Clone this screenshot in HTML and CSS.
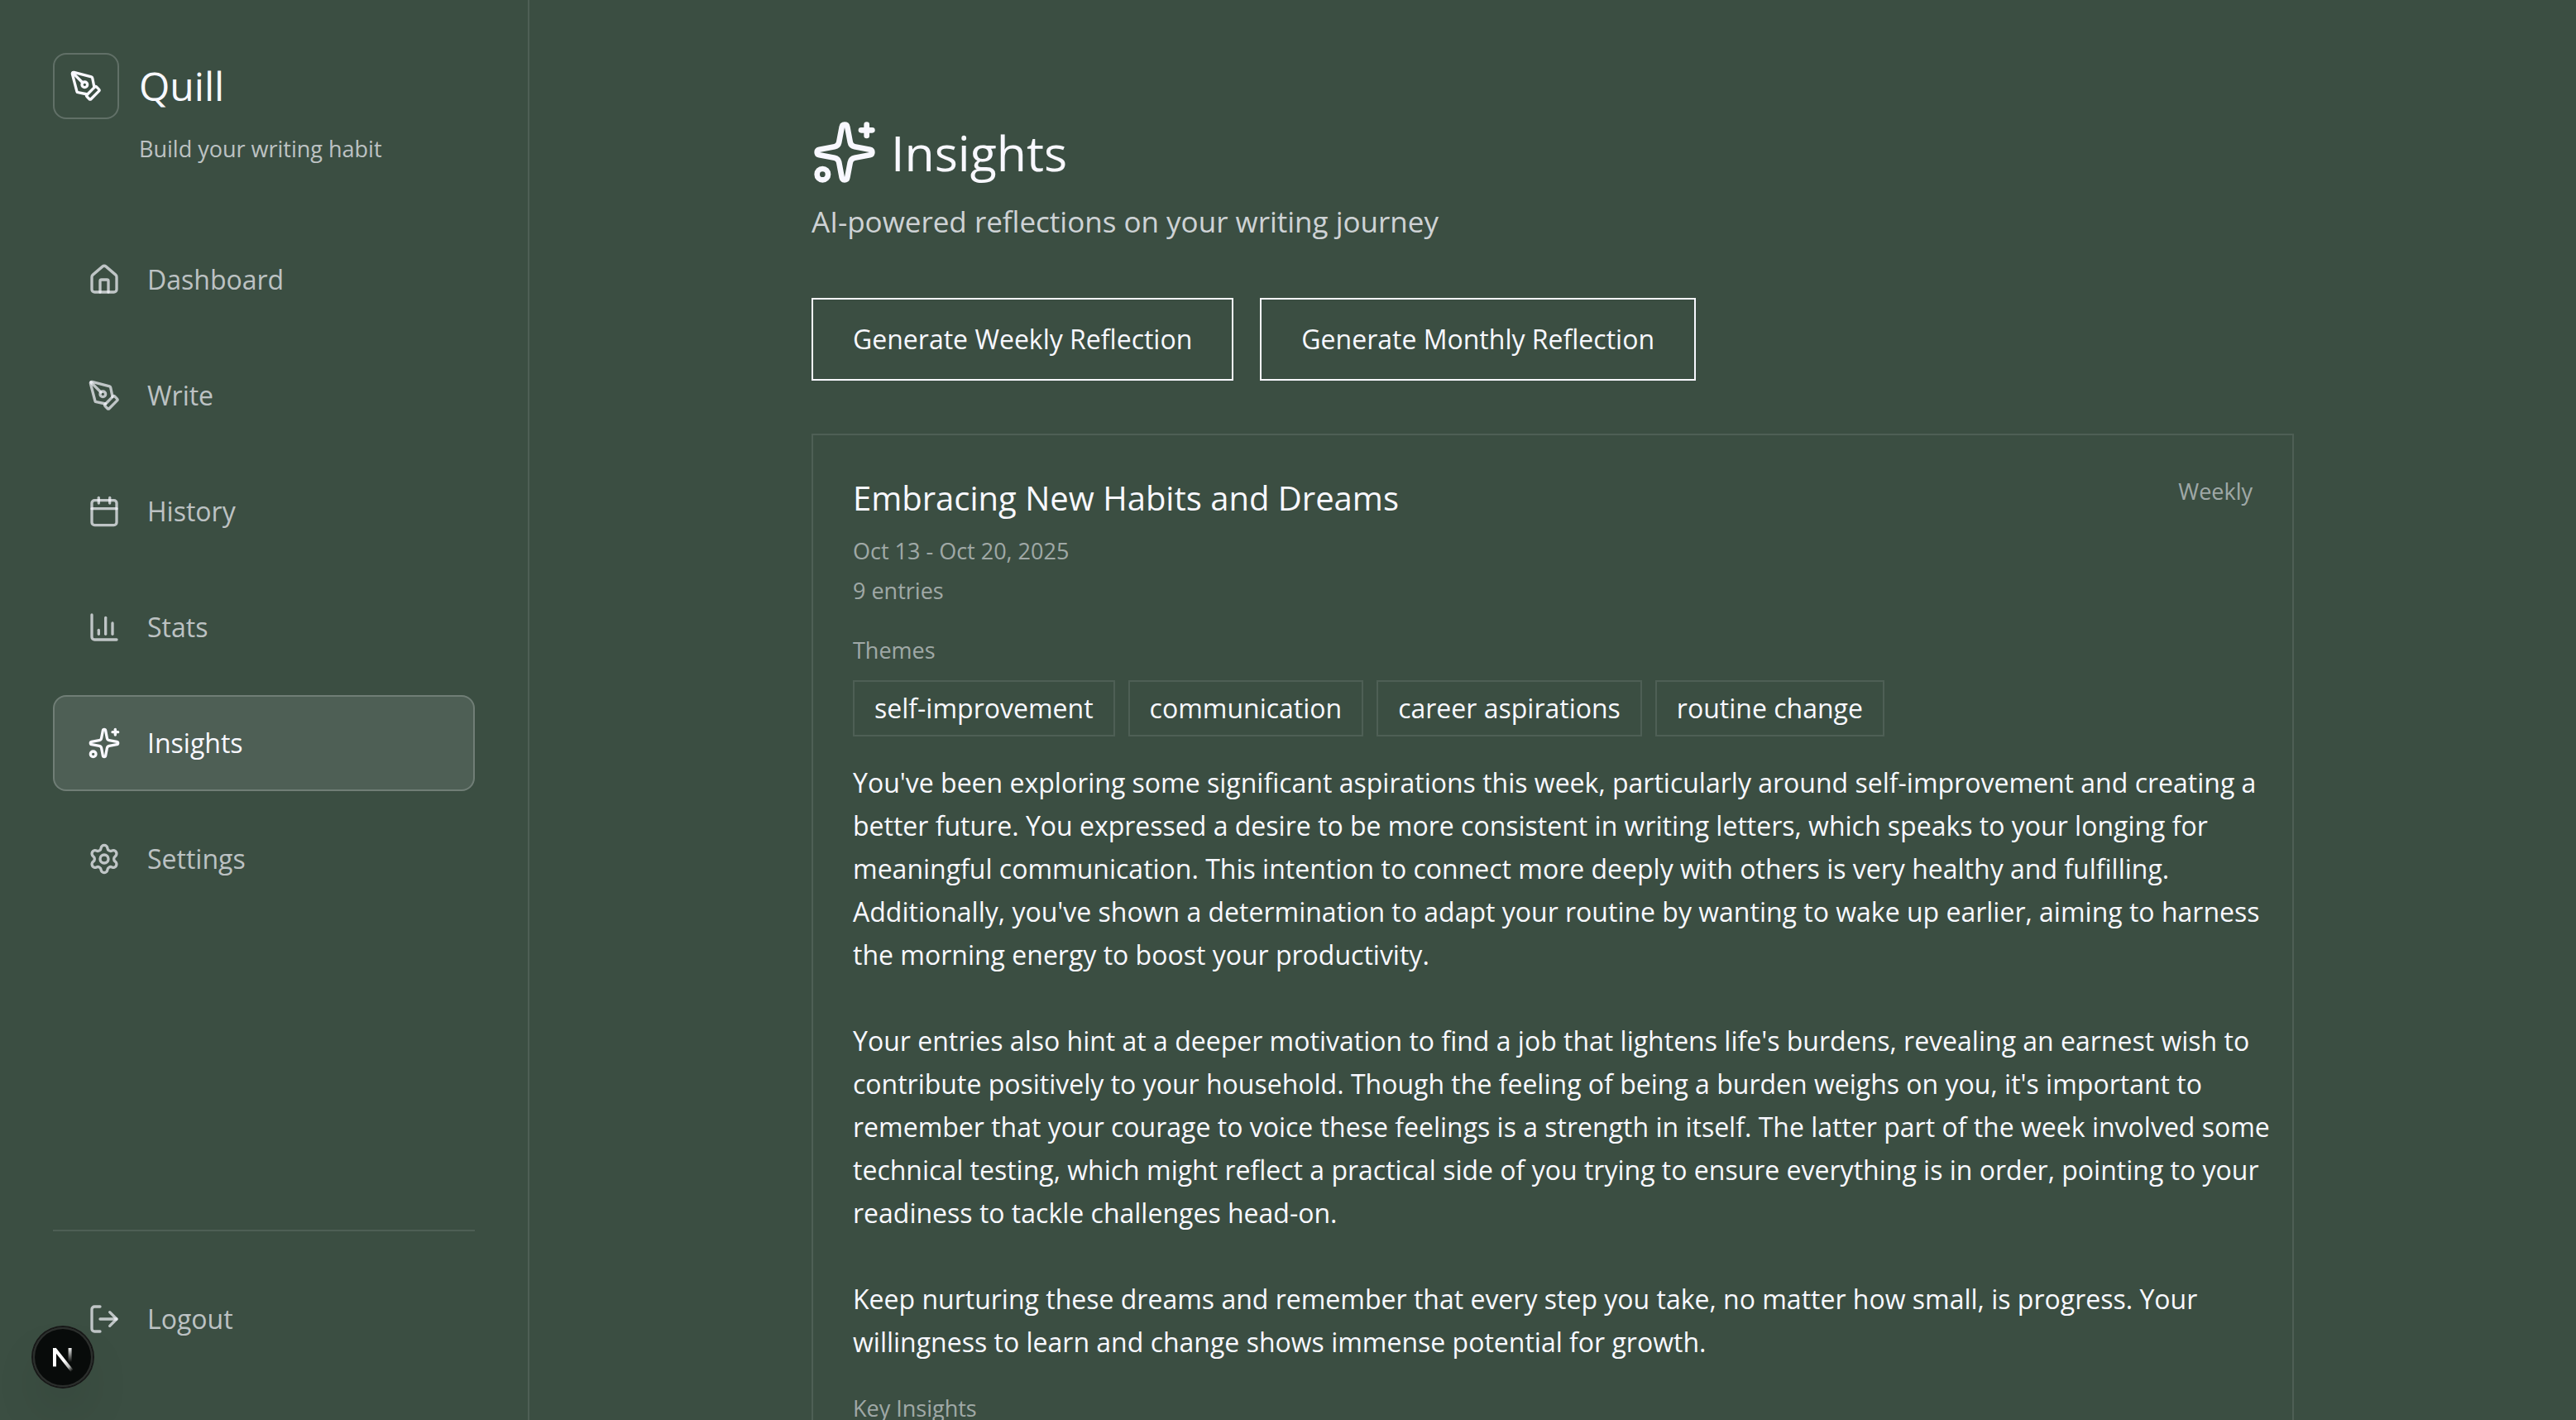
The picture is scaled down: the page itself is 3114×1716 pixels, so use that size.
FILE: index.html
```html
<!DOCTYPE html>
<html lang="en">
<head>
<meta charset="utf-8">
<meta name="viewport" content="width=device-width, initial-scale=1">
<title>Insights - Quill</title>
<link rel="stylesheet" href="styles.css">
</head>
<body>
<div class="app">
  <aside class="sidebar">
    <header class="brand">
      <div class="brand-row">
        <span class="brand-mark">
          <svg class="icon" viewBox="0 0 24 24" aria-hidden="true"><path d="M15.707 21.293a1 1 0 0 1-1.414 0l-1.586-1.586a1 1 0 0 1 0-1.414l5.586-5.586a1 1 0 0 1 1.414 0l1.586 1.586a1 1 0 0 1 0 1.414z"/><path d="m18 13-1.375-6.874a1 1 0 0 0-.746-.776L3.235 2.028a1 1 0 0 0-1.207 1.207L5.35 15.879a1 1 0 0 0 .776.746L13 18"/><path d="m2.3 2.3 7.286 7.286"/><circle cx="11" cy="11" r="2"/></svg>
        </span>
        <span class="brand-name">Quill</span>
      </div>
      <p class="brand-tagline">Build your writing habit</p>
    </header>

    <nav class="nav" aria-label="Main">
      <a class="nav-link" href="#dashboard">
        <svg class="icon" viewBox="0 0 24 24" aria-hidden="true"><path d="M15 21v-8a1 1 0 0 0-1-1h-4a1 1 0 0 0-1 1v8"/><path d="M3 10a2 2 0 0 1 .709-1.528l7-5.999a2 2 0 0 1 2.582 0l7 5.999A2 2 0 0 1 21 10v9a2 2 0 0 1-2 2H5a2 2 0 0 1-2-2z"/></svg>
        Dashboard
      </a>
      <a class="nav-link" href="#write">
        <svg class="icon" viewBox="0 0 24 24" aria-hidden="true"><path d="M15.707 21.293a1 1 0 0 1-1.414 0l-1.586-1.586a1 1 0 0 1 0-1.414l5.586-5.586a1 1 0 0 1 1.414 0l1.586 1.586a1 1 0 0 1 0 1.414z"/><path d="m18 13-1.375-6.874a1 1 0 0 0-.746-.776L3.235 2.028a1 1 0 0 0-1.207 1.207L5.35 15.879a1 1 0 0 0 .776.746L13 18"/><path d="m2.3 2.3 7.286 7.286"/><circle cx="11" cy="11" r="2"/></svg>
        Write
      </a>
      <a class="nav-link" href="#history">
        <svg class="icon" viewBox="0 0 24 24" aria-hidden="true"><path d="M8 2v4"/><path d="M16 2v4"/><rect width="18" height="18" x="3" y="4" rx="2"/><path d="M3 10h18"/></svg>
        History
      </a>
      <a class="nav-link" href="#stats">
        <svg class="icon" viewBox="0 0 24 24" aria-hidden="true"><path d="M3 3v16a2 2 0 0 0 2 2h16"/><path d="M18 17V9"/><path d="M13 17V5"/><path d="M8 17v-3"/></svg>
        Stats
      </a>
      <a class="nav-link is-active" href="#insights" aria-current="page">
        <svg class="icon" viewBox="0 0 24 24" aria-hidden="true"><path d="M11.017 2.814a1 1 0 0 1 1.966 0l1.051 5.558a2 2 0 0 0 1.594 1.594l5.558 1.051a1 1 0 0 1 0 1.966l-5.558 1.051a2 2 0 0 0-1.594 1.594l-1.051 5.558a1 1 0 0 1-1.966 0l-1.051-5.558a2 2 0 0 0-1.594-1.594l-5.558-1.051a1 1 0 0 1 0-1.966l5.558-1.051a2 2 0 0 0 1.594-1.594z"/><path d="M20 2v4"/><path d="M22 4h-4"/><circle cx="4" cy="20" r="2"/></svg>
        Insights
      </a>
      <a class="nav-link" href="#settings">
        <svg class="icon" viewBox="0 0 24 24" aria-hidden="true"><path d="M9.671 4.136a2.34 2.34 0 0 1 4.659 0 2.34 2.34 0 0 0 3.319 1.915 2.34 2.34 0 0 1 2.33 4.033 2.34 2.34 0 0 0 0 3.831 2.34 2.34 0 0 1-2.33 4.033 2.34 2.34 0 0 0-3.319 1.915 2.34 2.34 0 0 1-4.659 0 2.34 2.34 0 0 0-3.32-1.915 2.34 2.34 0 0 1-2.33-4.033 2.34 2.34 0 0 0 0-3.831A2.34 2.34 0 0 1 6.35 6.051a2.34 2.34 0 0 0 3.319-1.915"/><circle cx="12" cy="12" r="3"/></svg>
        Settings
      </a>
    </nav>

    <footer class="sidebar-footer">
      <button class="nav-link" type="button">
        <svg class="icon" viewBox="0 0 24 24" aria-hidden="true"><path d="m16 17 5-5-5-5"/><path d="M21 12H9"/><path d="M9 21H5a2 2 0 0 1-2-2V5a2 2 0 0 1 2-2h4"/></svg>
        Logout
      </button>
    </footer>
  </aside>

  <main class="main">
    <div class="content">
      <header class="page-header">
        <h1 class="page-title">
          <svg class="icon icon-large" viewBox="0 0 24 24" aria-hidden="true"><path d="M11.017 2.814a1 1 0 0 1 1.966 0l1.051 5.558a2 2 0 0 0 1.594 1.594l5.558 1.051a1 1 0 0 1 0 1.966l-5.558 1.051a2 2 0 0 0-1.594 1.594l-1.051 5.558a1 1 0 0 1-1.966 0l-1.051-5.558a2 2 0 0 0-1.594-1.594l-5.558-1.051a1 1 0 0 1 0-1.966l5.558-1.051a2 2 0 0 0 1.594-1.594z"/><path d="M20 2v4"/><path d="M22 4h-4"/><circle cx="4" cy="20" r="2"/></svg>
          Insights
        </h1>
        <p class="page-subtitle">AI-powered reflections on your writing journey</p>
      </header>

      <div class="actions">
        <button class="button" type="button">Generate Weekly Reflection</button>
        <button class="button" type="button">Generate Monthly Reflection</button>
      </div>

      <article class="card">
        <header class="card-header">
          <div>
            <h2 class="card-title">Embracing New Habits and Dreams</h2>
            <p class="card-meta">Oct 13 - Oct 20, 2025</p>
            <p class="card-meta">9 entries</p>
          </div>
          <span class="card-period">Weekly</span>
        </header>

        <section class="themes">
          <h3 class="label">Themes</h3>
          <ul class="tags">
            <li class="tag">self-improvement</li>
            <li class="tag">communication</li>
            <li class="tag">career aspirations</li>
            <li class="tag">routine change</li>
          </ul>
        </section>

        <p class="reflection">You've been exploring some significant aspirations this week, particularly around self-improvement and creating a better future. You expressed a desire to be more consistent in writing letters, which speaks to your longing for meaningful communication. This intention to connect more deeply with others is very healthy and fulfilling. Additionally, you've shown a determination to adapt your routine by wanting to wake up earlier, aiming to harness the morning energy to boost your productivity.

Your entries also hint at a deeper motivation to find a job that lightens life's burdens, revealing an earnest wish to contribute positively to your household. Though the feeling of being a burden weighs on you, it's important to remember that your courage to voice these feelings is a strength in itself. The latter part of the week involved some technical testing, which might reflect a practical side of you trying to ensure everything is in order, pointing to your readiness to tackle challenges head-on.

Keep nurturing these dreams and remember that every step you take, no matter how small, is progress. Your willingness to learn and change shows immense potential for growth.</p>

        <h3 class="label">Key Insights</h3>
      </article>
    </div>
  </main>
</div>

<button class="dev-badge" type="button" aria-label="Open developer tools">
  <svg class="dev-logo" viewBox="2 2 36 36" fill="none" aria-hidden="true">
    <defs>
      <linearGradient id="fade-diagonal" gradientUnits="userSpaceOnUse" x1="21" y1="22" x2="26" y2="28"><stop stop-color="#fff"/><stop offset="0.6" stop-color="#fff" stop-opacity="0.7"/><stop offset="1" stop-color="#fff" stop-opacity="0"/></linearGradient>
      <linearGradient id="fade-stem" gradientUnits="userSpaceOnUse" x1="24" y1="14" x2="24" y2="23"><stop stop-color="#fff"/><stop offset="1" stop-color="#fff" stop-opacity="0"/></linearGradient>
    </defs>
    <path d="M15 14.5V25.7" stroke="#fff" stroke-width="2"/>
    <path d="M15 15L25.8 28.6" stroke="url(#fade-diagonal)" stroke-width="2"/>
    <path d="M24.3 14.5V23" stroke="url(#fade-stem)" stroke-width="2"/>
  </svg>
</button>
</body>
</html>
```
FILE: styles.css
```css
:root {
  --bg: #3b4e42;
  --text: #f8f8ff;
  --text-strong: rgba(248, 248, 255, 0.8);
  --text-soft: rgba(248, 248, 255, 0.7);
  --text-muted: rgba(248, 248, 255, 0.55);
  --line: rgba(248, 248, 255, 0.1);
  --line-strong: rgba(248, 248, 255, 0.2);
}

* {
  box-sizing: border-box;
  margin: 0;
  padding: 0;
}

body {
  background: var(--bg);
  color: var(--text);
  font-family: "Open Sans", "Noto Sans", sans-serif;
  font-size: 32px;
  font-weight: 400;
  line-height: 48px;
}

h1,
h2,
h3 {
  font-weight: inherit;
}

button {
  background: none;
  border: 0;
  color: inherit;
  cursor: pointer;
  font: inherit;
}

a {
  color: inherit;
  text-decoration: none;
}

.icon {
  width: 40px;
  height: 40px;
  flex: none;
  fill: none;
  stroke: currentColor;
  stroke-width: 2;
  stroke-linecap: round;
  stroke-linejoin: round;
}

.icon-large {
  width: 80px;
  height: 80px;
}

.app {
  display: flex;
  height: 100vh;
}

/* Sidebar */

.sidebar {
  display: flex;
  flex: none;
  flex-direction: column;
  width: 640px;
  padding: 64px;
  border-right: 2px solid var(--line);
}

.brand {
  margin-bottom: 80px;
}

.brand-row {
  display: flex;
  align-items: center;
  gap: 24px;
}

.brand-mark {
  display: grid;
  place-items: center;
  width: 80px;
  height: 80px;
  border: 2px solid var(--line-strong);
  border-radius: 16px;
}

.brand-name {
  font-size: 48px;
  line-height: 64px;
}

.brand-tagline {
  margin-top: 16px;
  padding-left: 104px;
  color: var(--text-soft);
  font-size: 27px;
  line-height: 40px;
}

.nav {
  display: flex;
  flex: 1;
  flex-direction: column;
  gap: 24px;
}

.nav-link {
  display: flex;
  align-items: center;
  gap: 32px;
  width: 100%;
  padding: 32px 40px;
  border: 2px solid transparent;
  border-radius: 16px;
  color: var(--text-soft);
}

.nav-link.is-active {
  background: var(--line);
  border-color: var(--line-strong);
  color: var(--text);
}

.sidebar-footer {
  padding-top: 48px;
  border-top: 2px solid var(--line);
}

/* Main column */

.main {
  flex: 1;
  min-width: 0;
  padding: 144px 64px;
  overflow-y: auto;
  scrollbar-width: none;
}

.content {
  max-width: 1792px;
  margin: 0 auto;
}

.page-header {
  margin-bottom: 64px;
}

.page-title {
  display: flex;
  align-items: center;
  gap: 16px;
  font-size: 59px;
  line-height: 80px;
}

.page-subtitle {
  margin-top: 16px;
  color: var(--text-strong);
  font-size: 35px;
  line-height: 56px;
}

.actions {
  display: flex;
  flex-wrap: wrap;
  gap: 32px;
  margin-bottom: 64px;
}

.button {
  padding: 24px 48px;
  border: 2px solid var(--text);
}

/* Reflection card */

.card {
  padding: 48px;
  border: 2px solid var(--line);
}

.card-header {
  display: flex;
  align-items: flex-start;
  justify-content: space-between;
  margin-bottom: 28px;
}

.card-title {
  margin-bottom: 12px;
  font-size: 40px;
  line-height: 56px;
}

.card-meta {
  color: var(--text-muted);
  font-size: 27px;
}

.card-period,
.label {
  color: var(--text-muted);
  font-size: 27px;
  line-height: 40px;
}

.tags {
  display: flex;
  flex-wrap: wrap;
  gap: 16px;
  margin-top: 16px;
  list-style: none;
}

.tag {
  padding: 8px 24px;
  border: 2px solid var(--line);
}

.reflection {
  margin: 30px -24px 34px 0;
  line-height: 52px;
  white-space: pre-line;
}

/* Floating badge */

.dev-badge {
  position: fixed;
  bottom: 40px;
  left: 40px;
  width: 72px;
  height: 72px;
  border-radius: 50%;
  background: rgba(0, 0, 0, 0.85);
  box-shadow: 0 0 0 2px #171717, inset 0 0 0 2px rgba(255, 255, 255, 0.14), 0 32px 64px -16px rgba(0, 0, 0, 0.24);
}

.dev-logo {
  display: block;
  width: 72px;
  height: 72px;
}
```
